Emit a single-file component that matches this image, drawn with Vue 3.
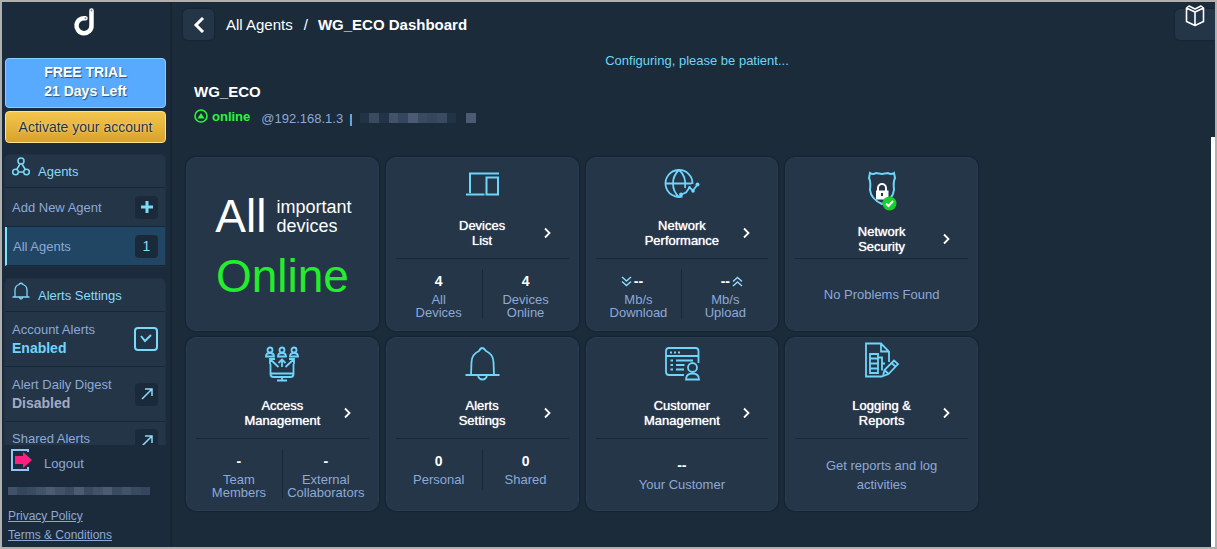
<script setup>
const cards = [
  { icon: 'devices', title: ['Devices', 'List'], stats: [{ value: '4', label: 'All Devices' }, { value: '4', label: 'Devices Online' }] },
  { icon: 'network', title: ['Network', 'Performance'], stats: [{ value: '--', label: 'Mb/s Download', dir: 'down' }, { value: '--', label: 'Mb/s Upload', dir: 'up' }] },
  { icon: 'security', title: ['Network', 'Security'], note: 'No Problems Found' },
  { icon: 'access', title: ['Access', 'Management'], stats: [{ value: '-', label: 'Team Members' }, { value: '-', label: 'External Collaborators' }] },
  { icon: 'bell', title: ['Alerts', 'Settings'], stats: [{ value: '0', label: 'Personal' }, { value: '0', label: 'Shared' }] },
  { icon: 'customer', title: ['Customer', 'Management'], value: '--', note: 'Your Customer' },
  { icon: 'report', title: ['Logging &', 'Reports'], note: 'Get reports and log activities' },
]
const userMask = [3, 2, 4, 3, 5, 3, 4, 5, 4, 3, 5, 4, 3, 4, 2]
const hostMask = [1, 4, 1, 3, 2, 5, 4, 2, 4, 1, 0, 5]
</script>

<template>
  <div class="app">
    <aside class="sidebar">
      <a class="logo" href="#" aria-label="Home">
        <svg width="24" height="30" viewBox="0 0 24 30">
          <path d="M12.500 10.300A7.500 7.500 0 1 0 18.500 17.500V2.500" fill="none" stroke="#fff" stroke-width="4.500" stroke-linecap="round" />
          <circle cx="18.500" cy="2.500" r="1" fill="#7a8592" />
          <circle cx="12.500" cy="10.300" r="1" fill="#7a8592" />
        </svg>
      </a>
      <div class="trial"><span>FREE TRIAL</span><span>21 Days Left</span></div>
      <button class="activate" type="button">Activate your account</button>

      <nav class="menus">
        <section class="menu">
          <h2 class="menu-head">
            <svg width="18" height="20" viewBox="0 0 18 20" fill="none" stroke="#7cd9f8" stroke-width="1.500">
              <circle cx="9" cy="4" r="3" /><circle cx="3.500" cy="15" r="2.800" /><circle cx="14.500" cy="15" r="2.800" />
              <path d="M8 7 4.700 12.500M10 7l3.300 5.500M6.300 15h5.400" />
            </svg>
            Agents
          </h2>
          <a class="row" href="#"><span>Add New Agent</span>
            <span class="tile"><svg width="12" height="12" viewBox="0 0 12 12"><path d="M6 0v12M0 6h12" stroke="#7cd9f8" stroke-width="3" /></svg></span>
          </a>
          <a class="row active" href="#"><span>All Agents</span><span class="tile">1</span></a>
        </section>

        <section class="menu">
          <h2 class="menu-head">
            <svg width="18" height="20" viewBox="0 0 18 20" fill="none" stroke="#7cd9f8" stroke-width="1.300">
              <path d="M.500 16h17M3 16V9a6 6 0 0 1 4-5.500q2-2.500 4 0A6 6 0 0 1 15 9v7M7 16q2 4 4 0" />
            </svg>
            Alerts Settings
          </h2>
          <a class="row tall" href="#"><span>Account Alerts<b class="on">Enabled</b></span>
            <span class="tile check"><svg width="14" height="12" viewBox="0 0 14 12"><path d="m2 3 4 5 6-6" fill="none" stroke="#7cd9f8" stroke-width="2" /></svg></span>
          </a>
          <a class="row tall" href="#"><span>Alert Daily Digest<b>Disabled</b></span>
            <span class="tile"><svg class="go" width="12" height="12" viewBox="0 0 12 12"><path d="m1 11 10-10M4 1h7v7" /></svg></span>
          </a>
          <a class="row last" href="#"><span>Shared Alerts</span>
            <span class="tile"><svg class="go" width="12" height="12" viewBox="0 0 12 12"><path d="m1 11 10-10M4 1h7v7" /></svg></span>
          </a>
        </section>
      </nav>

      <footer class="foot">
        <button class="logout" type="button">
          <svg width="22" height="24" viewBox="0 0 22 24">
            <path d="M18 4V2H2v20h16v-3" fill="none" stroke="#8fc6f4" stroke-width="2" />
            <path d="M5 8h8V4l9 8-9 8v-4H5z" fill="#ff1f80" />
          </svg>
          Logout
        </button>
        <div class="mask user" aria-hidden="true"><i v-for="(n, i) in userMask" :key="i" :class="'m' + n"></i></div>
        <a class="legal" href="#">Privacy Policy</a>
        <a class="legal" href="#">Terms &amp; Conditions</a>
      </footer>
    </aside>

    <main class="main">
      <header class="top">
        <button class="back" type="button" aria-label="Back">
          <svg width="12" height="16" viewBox="0 0 12 16"><path d="M10 1 3 8l7 7" fill="none" stroke="#fff" stroke-width="3" /></svg>
        </button>
        <a class="crumb" href="#">All Agents</a>
        <span class="slash">/</span>
        <h1>WG_ECO Dashboard</h1>
        <button class="guide" type="button" aria-label="Guide">
          <svg width="20" height="22" viewBox="0 0 20 22" fill="none" stroke="#fff" stroke-width="1.600" stroke-linejoin="round">
            <path d="M1.500 3v13.500l8.500 4 8.500-4V3L10 7zM10 7v13.500M1.500 3 4 1l6 3 6-3 2.500 2" />
          </svg>
        </button>
      </header>

      <p class="wait">Configuring, please be patient...</p>

      <section class="agent">
        <h2>WG_ECO</h2>
        <div class="status">
          <span class="state">
            <svg width="14" height="14" viewBox="0 0 14 14"><circle cx="7" cy="7" r="6" fill="none" stroke="#2df53c" stroke-width="1.600" /><path d="m7 4 3.500 5.500h-7z" fill="#2df53c" /></svg>
            <b>online</b>
          </span>
          <span class="ip">@192.168.1.3</span>
          <span class="bar">|</span>
          <span class="mask host" aria-hidden="true"><i v-for="(n, i) in hostMask" :key="i" :class="'m' + n"></i></span>
        </div>
      </section>

      <section class="grid">
        <article class="card summary">
          <div class="all"><span class="big">All</span><span class="what">important<br />devices</span></div>
          <div class="big green">Online</div>
        </article>

        <article v-for="c in cards" :key="c.icon" class="card">
          <a class="head" href="#">
            <svg class="icon" :class="{ high: c.icon === 'security' }" :viewBox="c.icon === 'security' ? '0 0 36 42' : '0 0 36 36'">
              <g v-if="c.icon === 'devices'">
                <path d="M35 7.500H6V27M2 28.500h18.500" /><path d="M22.500 11.500H34v17H22.500z" />
              </g>
              <g v-else-if="c.icon === 'network'" class="thin">
                <path d="M18.500 30.500A13.500 13.500 0 1 1 28.500 18M1.500 17.500h26M15 4c-8 7-8 20 0 27M15 4c5 4 7 11 6 18" />
                <path d="m17 28.500 5-2 3.500-5 3.500 3 4.500-6" />
                <g class="solid"><circle cx="17" cy="28.500" r="2" /><circle cx="25.500" cy="21.500" r="1.500" /><circle cx="29" cy="25" r="1.800" /><circle cx="33.500" cy="18.500" r="2" /></g>
              </g>
              <g v-else-if="c.icon === 'security'">
                <path d="M6 7q3 2 6 0l6 1 6-1q3 2 6 0l1 5q-2 4-1 12-1 9-12 14Q7 33 6 24q1-8-1-12z" />
                <path d="M14 25v-3a4 4 0 0 1 8 0v3" stroke="#fff" />
                <path class="white" d="M12 24.500h12.500v9H12z" /><path d="M18 27v3" stroke="#243648" />
                <circle class="ok" cx="25.500" cy="37.500" r="7" /><path d="m22 37.500 2.500 2.500 4.500-5" stroke="#fff" />
              </g>
              <g v-else-if="c.icon === 'access'" class="thin">
                <g v-for="x in [6, 18, 30]" :key="x"><circle :cx="x" cy="4" r="2.500" /><path :d="`M${x - 4} 10.500q0-3.500 4-3.500t4 3.500z`" /></g>
                <path d="M6.500 18v10q0 3 3 3h17q3 0 3-3V18M6.500 27.500h23M18 31v3M13 34.500h10" />
                <path d="m14.500 21-8-7.500M6 18v-5h5M18 21v-7M14.500 17l3.500-3.500 3.500 3.500M21.500 21l8-7.500M25 13h5v5" />
              </g>
              <g v-else-if="c.icon === 'bell'" class="thin">
                <path d="M1.500 29h34M7 29l.500-13Q8 8 15 5q3-6 7 0 7 3 7.500 11l.500 13M14 29.500q1 4 4.500 4t4.500-4" />
              </g>
              <g v-else-if="c.icon === 'customer'" class="thin">
                <path d="M20 29H5q-3 0-3-3V5q0-3 3-3h26.500q3 0 3 3v12M2 10h32.500M12 14.500h17M12 19h8.500M12 23.500h8" />
                <path d="M6 6.500h2M10 6.500h2M14 6.500h2M6.500 14.500h2.500M6.500 19h2.500M6.500 23.500h2.500" stroke-width="2" />
                <circle cx="28.500" cy="21.500" r="4.500" /><path d="M22 33.500q0-6 6.500-6t6.500 6z" />
              </g>
              <g v-else class="thin">
                <path d="M25 16V5.500l-8-8H2v33h16M17-2.500v8h8M6 8h8v19H6zM6 12.500h8M6 17.500h8M6 22.500h8M14 11.500h4v13M18 17.500h3" />
                <path d="m19 30 1.500-6L30 14.500l4 3.500-9.500 10zM20.500 24l4 4M27.500 17l4 3.500" />
              </g>
            </svg>
            <span class="title">
              <strong>{{ c.title[0] }}<br />{{ c.title[1] }}</strong>
              <svg width="8" height="12" viewBox="0 0 8 12"><path d="m2 1.500 4.500 4.500L2 10.500" fill="none" stroke="#fff" stroke-width="1.800" /></svg>
            </span>
          </a>
          <div v-if="c.stats" class="stats">
            <div v-for="s in c.stats" :key="s.label" class="stat">
              <b :class="s.dir">
                <svg v-if="s.dir" width="11" height="11" viewBox="0 0 11 11"><path d="m1 1 4.500 4L10 1M1 5.500l4.500 4 4.500-4" fill="none" stroke="#8edcf8" stroke-width="1.500" /></svg>
                <span>{{ s.value }}</span>
              </b>
              <span>{{ s.label }}</span>
            </div>
          </div>
          <div v-else class="note"><b v-if="c.value">{{ c.value }}</b><span>{{ c.note }}</span></div>
        </article>
      </section>
      <div class="scroll" aria-hidden="true"></div>
    </main>
  </div>
</template>

<style>
html, body { background: #1b2b3a; }
</style>

<style scoped>
* { box-sizing: border-box; }
h1, h2, p { margin: 0; font-size: inherit; font-weight: normal; }
button { margin: 0; padding: 0; border: 0; background: none; color: inherit; font: inherit; }
a { color: inherit; text-decoration: none; }
svg { flex: none; display: block; }

.app {
  display: flex; height: 100vh; overflow: hidden;
  border: 2px solid #b0b0ae; background: #1b2b3a; color: #8ea9d6;
  font: 13px/15px "Liberation Sans", Arial, sans-serif;
}

.sidebar { flex: none; width: 170px; padding: 6px 4px 0 2px; display: flex; flex-direction: column; background: #1c2b3b; border-right: 2px solid #162433; }
.logo { display: flex; justify-content: center; height: 30px; margin-bottom: 20px; }
.trial {
  flex: none; width: 161px; height: 50px; margin-left: 1px; padding-bottom: 2px; display: flex; flex-direction: column; align-items: center; justify-content: center;
  border: 1px solid #84d2fb; border-radius: 4px; background: #57aaff; color: #fff; font-weight: bold; font-size: 14px; line-height: 19px; text-shadow: 1px 1px 1px #2c5581;
}
.activate {
  flex: none; width: 161px; height: 32px; margin: 3px 0 11px 1px; border: 1px solid #ffe48b; border-radius: 4px;
  background: linear-gradient(#f3c64f, #d9a22b); color: #26303a; font-size: 14px; text-shadow: 0 0 2px #fff3c4;
}
.menus { flex: 1; min-height: 0; overflow-y: auto; scrollbar-width: none; }
.menu { width: 162px; margin-bottom: 11px; border: 1px solid #213143; border-radius: 5px 5px 0 0; background: #233547; }
.menu-head { display: flex; gap: 8px; height: 33px; padding: 2px 0 0 7px; border-bottom: 1px solid #182737; color: #86dcfa; line-height: 29px; }
.row { display: flex; align-items: center; justify-content: space-between; height: 39px; padding: 0 7px; border-bottom: 1px solid #182737; }
.row.active { border-left: 2px solid #7ce4fb; background: #214664; padding-left: 6px; }
.row.tall { height: 55px; line-height: 19px; }
.row.last { align-items: flex-start; height: 23px; padding-top: 7px; border: 0; line-height: 19px; overflow: hidden; }
.row b { display: block; font-size: 14px; color: #a4abc6; }
.row b.on { color: #6fd5fb; }
.tile { display: flex; align-items: center; justify-content: center; width: 23px; height: 23px; border-radius: 4px; background: #1a2a3b; color: #86dcfa; font-size: 14px; }
.tile.check { width: 24px; height: 24px; border: 2px solid #7cd9f8; background: #213346; }
.go path { fill: none; stroke: #8edcf8; stroke-width: 1.500; }

.foot { flex: none; height: 102px; padding: 2px 0 0 4px; display: flex; flex-direction: column; align-items: flex-start; }
.logout { display: flex; gap: 12px; margin: 1px 0 12px 2px; line-height: 32px; height: 26px; }
.legal { font-size: 12px; line-height: 19px; text-decoration: underline; }
.mask { display: flex; }
.mask i { flex: 1; }
.user { width: 142px; height: 8px; margin: 1px 0 12px; }
.host { width: 116px; height: 10px; margin-left: 6px; }
.m1 { background: #213347; } .m2 { background: #35475e; } .m3 { background: #425269; } .m4 { background: #3a4a61; } .m5 { background: #4d5a74; }

.main { position: relative; flex: 1; min-width: 0; padding: 7px 4px 0 11px; }
.top { display: flex; align-items: center; height: 31px; color: #fff; font-size: 15px; }
.back, .guide { display: flex; align-items: center; justify-content: center; width: 31px; height: 31px; border-radius: 5px; background: #233547; box-shadow: 0 0 1px 1px #172635; }
.crumb { margin-left: 12px; }
.slash { margin: 0 10px 0 11px; }
.top h1 { font-size: 15px; font-weight: bold; }
.guide { width: 40px; margin: 0 -4px 0 auto; align-items: flex-start; border-radius: 5px 0 0 5px; overflow: visible; }
.guide svg { margin-top: -4px; }
.wait { margin-top: 13px; text-align: center; color: #6fd5fb; }
.agent { margin: 14px 0 0 11px; }
.agent h2 { color: #fff; font-size: 15px; font-weight: bold; line-height: 20px; }
.status { display: flex; align-items: center; height: 32px; }
.state { display: flex; align-items: center; gap: 4px; margin-right: 11px; padding-bottom: 4px; color: #2df53c; }
.bar { margin: 0 1px 0 6px; color: #dbe6f5; }

.grid { display: grid; grid-template-columns: repeat(4, minmax(0, 1fr)); gap: 6px 7px; max-width: 792px; margin: 23px 0 0 3px; }
.card { min-height: 174px; border: 1px solid #2a3c50; border-radius: 10px; background: #243648; box-shadow: 0 0 1px 1px #152433; }
.summary { display: flex; flex-direction: column; align-items: center; justify-content: center; gap: 8px; padding-top: 4px; color: #fff; }
.all { display: flex; align-items: center; gap: 10px; padding-left: 2px; }
.big { font-size: 46px; line-height: 52px; }
.green { color: #22ee2e; }
.what { padding-top: 2px; font-size: 18px; line-height: 19px; }
.head { display: flex; flex-direction: column; align-items: center; gap: 16px; height: 101px; margin: 0 9px; padding-top: 8px; border-bottom: 1px solid #182838; }
.icon { width: 36px; height: 36px; overflow: visible; fill: none; stroke: #6fd5fb; stroke-width: 2; }
.icon.high { height: 42px; }
.thin { stroke-width: 1.800; }
.solid { fill: #6fd5fb; stroke: none; }
.white { fill: #fff; stroke: none; }
.ok { fill: #18cf2c; stroke: none; }
.title { display: grid; grid-template-columns: 8px 1fr 8px; align-items: center; width: 100%; padding: 0 18px; color: #fff; text-align: center; }
.title strong { grid-column: 2; font-weight: normal; text-shadow: 0 0 1px #fff; }
.stats { display: flex; margin: 10px 9px 0; }
.stat { flex: 1; width: 0; min-height: 41px; display: flex; flex-direction: column; align-items: center; text-align: center; line-height: 13px; }
.stat + .stat { border-left: 1px solid #182838; }
.stat > span { width: min-content; }
.stat b { display: flex; align-items: center; gap: 2px; height: 24px; color: #fff; font-size: 14px; }
.stat b.down { padding-right: 13px; }
.stat b.up { flex-direction: row-reverse; padding-left: 13px; }
.up svg { transform: rotate(180deg); }
.note { display: flex; flex-direction: column; align-items: center; justify-content: center; height: 71px; padding: 0 30px; text-align: center; line-height: 19px; }
.note b { color: #fff; font-size: 14px; }

.scroll { position: absolute; right: 0; top: 135px; bottom: 0; width: 4px; background: #fff; }
</style>
